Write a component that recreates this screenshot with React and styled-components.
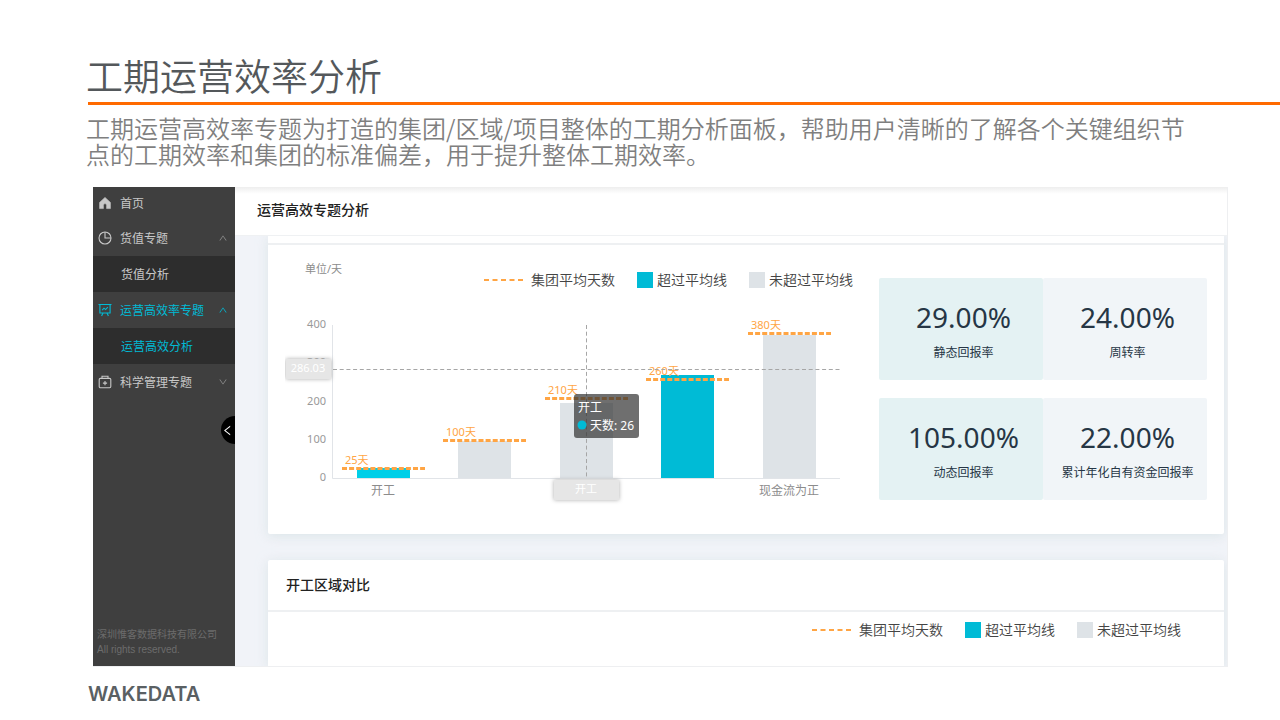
import React from "react";
import styled, { createGlobalStyle } from "styled-components";
import { AiOutlineUp, AiOutlineDown, AiOutlineLeft } from "react-icons/ai";

const HomeIcon = () => (
  <svg className="icon" viewBox="0 0 14 14" aria-hidden="true">
    <path
      d="M7 1.4 1.6 6.4V12.6H5.4V9.2a1.6 1.6 0 0 1 3.2 0V12.6H12.4V6.4Z"
      fill="currentColor"
      stroke="currentColor"
      strokeWidth="0.6"
      strokeLinejoin="round"
    />
  </svg>
);

const PieIcon = () => (
  <svg className="icon" viewBox="0 0 14 14" aria-hidden="true">
    <g fill="none" stroke="currentColor" strokeWidth="1.1">
      <circle cx="7" cy="7" r="6" />
      <path d="M7 1V7H13" />
    </g>
  </svg>
);

const BoardIcon = () => (
  <svg className="icon" viewBox="0 0 14 14" aria-hidden="true">
    <g fill="none" stroke="currentColor" strokeWidth="1.1">
      <path d="M0.5 1.5H13.5M1.9 1.5V10H12.1V1.5" />
      <path d="M4.2 7.2 6 5.2 7.6 6.6 9.8 4.2" />
      <path d="M5 10 3.6 13M9 10 10.4 13" />
    </g>
  </svg>
);

const KitIcon = () => (
  <svg className="icon" viewBox="0 0 14 14" aria-hidden="true">
    <g fill="none" stroke="currentColor" strokeWidth="1.1">
      <rect x="1.2" y="3.4" width="11.6" height="9.4" rx="1.2" />
      <path d="M4 3.4V1.3H10V3.4M7 6V10.2M4.9 8.1H9.1" />
    </g>
  </svg>
);

const menu = [
  { label: "首页", icon: HomeIcon },
  { label: "货值专题", icon: PieIcon, arrow: "up", child: "货值分析" },
  {
    label: "运营高效率专题",
    icon: BoardIcon,
    arrow: "up",
    child: "运营高效分析",
    active: true,
  },
  { label: "科学管理专题", icon: KitIcon, arrow: "down" },
];

const ticks = [
  { value: 400, y: 24 },
  { value: 300, y: 62 },
  { value: 200, y: 101 },
  { value: 100, y: 139 },
  { value: 0, y: 177 },
];

const bars = [
  { x: 72, top: 168, fill: "#00cfe8", line: 168, label: "25天", name: "开工" },
  { x: 173, top: 141, fill: "#dee3e7", line: 140, label: "100天" },
  { x: 275, top: 103, fill: "#dee3e7", line: 98, label: "210天" },
  { x: 376, top: 75, fill: "#00bbd6", line: 79, label: "260天" },
  { x: 478, top: 35, fill: "#dee3e7", line: 33, label: "380天", name: "现金流为正" },
];

const stats = [
  { value: "29.00%", label: "静态回报率", tint: true },
  { value: "24.00%", label: "周转率" },
  { value: "105.00%", label: "动态回报率", tint: true },
  { value: "22.00%", label: "累计年化自有资金回报率" },
];

const ChartLegend = () => (
  <Legend>
    <li>
      <svg width="39" height="2" aria-hidden="true">
        <line x1="0" y1="1" x2="39" y2="1" stroke="#ffa544" strokeWidth="2" strokeDasharray="5 3.5" />
      </svg>
      <LegendText $wide>集团平均天数</LegendText>
    </li>
    <li>
      <Swatch $color="#00bbd6" />
      <LegendText>超过平均线</LegendText>
    </li>
    <li>
      <Swatch $color="#dee3e7" />
      <LegendText>未超过平均线</LegendText>
    </li>
  </Legend>
);

const DaysChart = () => (
  <Chart viewBox="0 0 560 205" role="img" aria-label="单位/天">
    {ticks.map((tick) => (
      <text key={tick.value} className="tick" x="41" y={tick.y + 4}>
        {tick.value}
      </text>
    ))}
    <path d="M47.5 25V178.5H555" fill="none" stroke="#e1e4e8" />
    {bars.map((bar) => (
      <g key={bar.label}>
        <rect x={bar.x} y={bar.top} width="53" height={178 - bar.top} fill={bar.fill} />
        <line
          x1={bar.x - 15}
          x2={bar.x + 68}
          y1={bar.line + 0.5}
          y2={bar.line + 0.5}
          stroke="#ffa544"
          strokeWidth="3"
          strokeDasharray="5 2.1"
        />
        <text className="mark" x={bar.x - 12} y={bar.line - 4}>
          {bar.label}
        </text>
        {bar.name && (
          <text className="name" x={bar.x + 26} y="195">
            {bar.name}
          </text>
        )}
      </g>
    ))}
    <g stroke="#a6a6a6" strokeDasharray="4 2.7">
      <line x1="48" y1="69.5" x2="555" y2="69.5" />
      <line x1="301.5" y1="25" x2="301.5" y2="178" />
    </g>
    <rect className="pointer" x="1" y="59" width="45" height="20" />
    <text className="pointer-text" x="23" y="72">
      286.03
    </text>
    <rect className="pointer" x="269" y="180" width="65" height="20" />
    <text className="pointer-text" x="301" y="193">
      开工
    </text>
    <rect x="289" y="94" width="65" height="44" rx="3" fill="rgba(50,50,50,0.7)" />
    <text className="tip" x="293" y="112">
      开工
    </text>
    <circle cx="297" cy="125" r="4.5" fill="#00bbd6" />
    <text className="tip" x="305" y="130">
      天数: 26
    </text>
  </Chart>
);

const App = () => {
  return (
    <>
      <GlobalStyle />
      <Page>
        <Heading>工期运营效率分析</Heading>
        <Rule />
        <Intro>
          工期运营高效率专题为打造的集团/区域/项目整体的工期分析面板，帮助用户清晰的了解各个关键组织节点的工期效率和集团的标准偏差，用于提升整体工期效率。
        </Intro>
        <Frame>
          <Sidebar>
            <nav>
              {menu.map(({ label, icon: Icon, arrow, child, active }) => (
                <React.Fragment key={label}>
                  <MenuButton type="button" $active={active} $first={!arrow}>
                    <Icon />
                    <span>{label}</span>
                    {arrow === "up" && <AiOutlineUp className="arrow" />}
                    {arrow === "down" && <AiOutlineDown className="arrow" />}
                  </MenuButton>
                  {child && (
                    <SubLink href="#" $active={active}>
                      {child}
                    </SubLink>
                  )}
                </React.Fragment>
              ))}
            </nav>
            <Collapse type="button" aria-label="收起">
              <AiOutlineLeft />
            </Collapse>
            <Copyright>
              深圳惟客数据科技有限公司
              <br />
              All rights reserved.
            </Copyright>
          </Sidebar>
          <Main>
            <TopBar>
              <h2>运营高效专题分析</h2>
            </TopBar>
            <Content>
              <Card $cut>
                <Overview>
                  <ChartColumn>
                    <ChartHead>
                      <Unit>单位/天</Unit>
                      <ChartLegend />
                    </ChartHead>
                    <DaysChart />
                  </ChartColumn>
                  <Stats>
                    {stats.map((stat) => (
                      <Stat key={stat.label} $tint={stat.tint}>
                        <strong>{stat.value}</strong>
                        <span>{stat.label}</span>
                      </Stat>
                    ))}
                  </Stats>
                </Overview>
              </Card>
              <Card>
                <CardTitle>开工区域对比</CardTitle>
                <Compare>
                  <ChartLegend />
                </Compare>
              </Card>
            </Content>
          </Main>
        </Frame>
        <Brand>WAKEDATA</Brand>
      </Page>
    </>
  );
};

const GlobalStyle = createGlobalStyle`
  * {
    box-sizing: border-box;
  }
  body {
    margin: 0;
    background: #fff;
    font-family: "Noto Sans", "Noto Sans CJK SC", sans-serif;
  }
  h1, h2, h3, p, ul {
    margin: 0;
    padding: 0;
  }
  button {
    border: none;
    font-family: inherit;
  }
`;

const Page = styled.div`
  padding: 50px 0 12px 86px;
`;

const Heading = styled.h1`
  padding-bottom: 2px;
  color: #54585b;
  font-family: "Noto Sans CJK SC", sans-serif;
  font-size: 37px;
  font-weight: 350;
  line-height: 50px;
`;

const Rule = styled.hr`
  height: 3px;
  margin: 0 0 0 2px;
  border: none;
  background: #ff6a00;
`;

const Intro = styled.p`
  max-width: 1110px;
  padding-top: 10px;
  color: #7f7f7f;
  font-family: "Noto Sans CJK SC", sans-serif;
  font-size: 24px;
  font-weight: 350;
  line-height: 26px;
`;

const Frame = styled.section`
  display: flex;
  margin: 20px 52px 0 7px;
  border-right: 1px solid #eeeff1;
  border-bottom: 1px solid #eeeff1;
`;

const Sidebar = styled.aside`
  position: relative;
  display: flex;
  flex-direction: column;
  flex: 0 0 142px;
  overflow: hidden;
  background: #3f3f3f;
`;

const MenuButton = styled.button`
  display: flex;
  align-items: center;
  width: 100%;
  height: ${(props) => (props.$first ? "33px" : "36px")};
  padding: 0 7px 0 5px;
  padding-bottom: ${(props) => (props.$first ? "2px" : "0")};
  background: transparent;
  color: ${(props) => (props.$active ? "#00bbd6" : "#c8c8c8")};
  font-size: 12px;
  cursor: pointer;
  .icon {
    width: 14px;
    height: 14px;
    margin-right: 8px;
  }
  .arrow {
    margin-left: auto;
    color: ${(props) => (props.$active ? "#00bbd6" : "#8f8f8f")};
    font-size: 10px;
  }
`;

const SubLink = styled.a`
  display: block;
  height: 36px;
  padding-left: 28px;
  background: #2d2d2d;
  color: ${(props) => (props.$active ? "#00bbd6" : "#c8c8c8")};
  font-size: 12px;
  line-height: 38px;
  text-decoration: none;
`;

const Collapse = styled.button`
  position: absolute;
  top: 229px;
  right: -14px;
  display: flex;
  align-items: center;
  width: 28px;
  height: 28px;
  padding: 0;
  border-radius: 50%;
  background: #000;
  color: #fff;
  font-size: 13px;
  cursor: pointer;
`;

const Copyright = styled.p`
  margin-top: auto;
  padding: 0 0 9px 4px;
  color: #6c6c6c;
  font-family: "Liberation Sans", "Noto Sans CJK SC", sans-serif;
  font-size: 10px;
  line-height: 15px;
`;

const Main = styled.main`
  flex: 1;
  min-width: 0;
  background: #f1f3f8;
`;

const TopBar = styled.header`
  height: 49px;
  padding: 0 22px;
  border-bottom: 1px solid #eff1f3;
  background: linear-gradient(#eeeeee, #ffffff 7px);
  h2 {
    color: #222;
    font-size: 14px;
    font-weight: 500;
    line-height: 46px;
  }
`;

const Content = styled.div`
  display: flex;
  flex-direction: column;
  gap: 26px;
  overflow: hidden;
  padding: 0 3px 0 33px;
`;

const Card = styled.article`
  padding-top: ${(props) => (props.$cut ? "7px" : "0")};
  border-radius: ${(props) => (props.$cut ? "0 0 2px 2px" : "2px 2px 0 0")};
  background: #fff;
  box-shadow: 0 2px 12px rgba(205, 220, 222, 0.6);
`;

const Overview = styled.div`
  display: flex;
  align-items: flex-start;
  gap: 34px;
  padding: 0 17px 29px;
  border-top: 2px solid #eef0f2;
`;

const ChartColumn = styled.div`
  flex: 1;
  min-width: 0;
`;

const ChartHead = styled.div`
  display: flex;
  align-items: flex-end;
  justify-content: space-between;
  height: 55px;
  padding: 0 0 10px 20px;
`;

const Unit = styled.span`
  align-self: center;
  color: #8c8c8c;
  font-size: 11px;
`;

const Legend = styled.ul`
  display: flex;
  gap: 22px;
  margin-right: -8px;
  list-style: none;
  li {
    display: flex;
    align-items: center;
  }
`;

const LegendText = styled.span`
  margin-left: ${(props) => (props.$wide ? "8px" : "4px")};
  color: #444;
  font-size: 14px;
  font-weight: 350;
  line-height: 20px;
`;

const Swatch = styled.i`
  width: 16px;
  height: 16px;
  background: ${(props) => props.$color};
`;

const Chart = styled.svg`
  display: block;
  width: 100%;
  height: auto;
  .tick {
    fill: #999;
    font-size: 11px;
    text-anchor: end;
  }
  .mark {
    fill: #ffa544;
    font-size: 11px;
  }
  .name {
    fill: #8c8c8c;
    font-size: 12px;
    text-anchor: middle;
  }
  .pointer {
    fill: #e6e6e6;
    filter: drop-shadow(0 0 2px #aaa);
  }
  .pointer-text {
    fill: #fff;
    font-size: 11px;
    text-anchor: middle;
  }
  .tip {
    fill: #fff;
    font-size: 12px;
  }
`;

const Stats = styled.div`
  display: grid;
  grid-template-columns: 1fr 1fr;
  row-gap: 18px;
  flex: 0 0 328px;
  padding-top: 33px;
`;

const Stat = styled.div`
  display: flex;
  flex-direction: column;
  align-items: center;
  height: 102px;
  padding: 19px 0 0 5px;
  border-radius: 2px;
  background: ${(props) => (props.$tint ? "#e4f2f3" : "#f1f5f8")};
  color: #263645;
  strong {
    font-size: 28px;
    font-weight: 400;
    line-height: 40px;
  }
  span {
    margin-top: 6px;
    font-size: 12px;
    line-height: 20px;
  }
`;

const CardTitle = styled.h3`
  padding: 0 18px;
  border-bottom: 2px solid #eef0f2;
  color: #222;
  font-size: 14px;
  font-weight: 500;
  line-height: 50px;
`;

const Compare = styled.div`
  display: flex;
  justify-content: flex-end;
  padding: 8px 51px 26px 18px;
`;

const Brand = styled.footer`
  margin: 15px 0 0 2px;
  color: #5a6063;
  font-family: Inter, sans-serif;
  font-size: 20px;
  font-weight: 600;
  line-height: 24px;
`;

export default App;
